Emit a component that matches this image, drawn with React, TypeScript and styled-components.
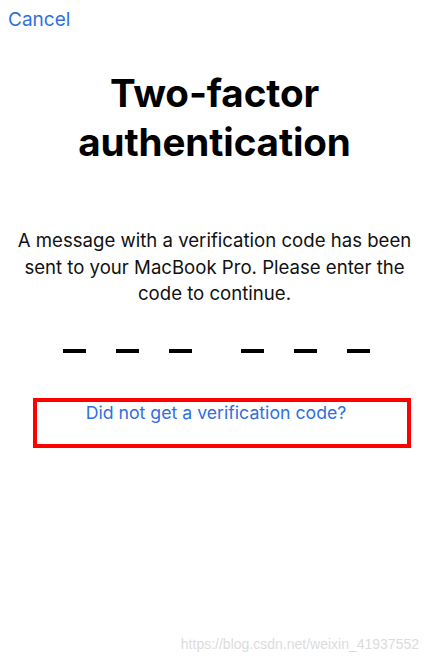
import styled, { createGlobalStyle } from 'styled-components';

const GlobalStyle = createGlobalStyle`
  html, body {
    margin: 0;
    padding: 0;
    background: #fff;
  }
  body {
    font-family: Inter, "Noto Sans", "Liberation Sans", sans-serif;
    -webkit-font-smoothing: antialiased;
  }
`;

const Screen = styled.div`
  position: relative;
  width: 429px;
  height: 661px;
  overflow: hidden;
  background: #fff;
  display: flex;
  flex-direction: column;
`;

const TopBar = styled.div`
  display: flex;
  align-items: center;
  height: 38px;
  padding: 0 8px;
`;

const TextButton = styled.button`
  border: none;
  background: none;
  padding: 0;
  font-family: inherit;
  font-size: 19px;
  color: #2f6fe0;
  cursor: pointer;
`;

const Title = styled.h1`
  margin: 31px 0 0;
  font-size: 38.6px;
  font-weight: 700;
  line-height: 49px;
  letter-spacing: -0.1px;
  text-align: center;
  color: #000;
`;

const Message = styled.p`
  margin: 60px 8px 0;
  font-size: 18.6px;
  line-height: 26.5px;
  text-align: center;
  color: #111;
`;

const CodeRow = styled.div`
  display: flex;
  justify-content: center;
  align-items: center;
  gap: 49px;
  margin-top: 28px;
  padding-left: 4px;
  height: 32px;
`;

const Group = styled.div`
  display: flex;
  gap: 30px;
`;

const Slot = styled.span`
  display: block;
  width: 23px;
  height: 4px;
  background: #000;
`;

const Highlight = styled.div`
  align-self: flex-start;
  margin: 31px 0 0 33px;
  width: 378px;
  height: 50px;
  box-sizing: border-box;
  border: 4px solid #ff0000;
  display: flex;
  justify-content: center;
`;

const LinkText = styled.a`
  font-size: 17.7px;
  line-height: 22px;
  color: #2f6fe0;
  text-decoration: none;
  margin-right: 12px;
`;

const Watermark = styled.div`
  position: absolute;
  right: 10px;
  bottom: 9px;
  font-family: "Liberation Sans", Arial, sans-serif;
  font-size: 14px;
  color: #dcdcdc;
`;

export default function App() {
  return (
    <>
      <GlobalStyle />
      <Screen>
        <TopBar>
          <TextButton>Cancel</TextButton>
        </TopBar>
        <Title>
          Two-factor
          <br />
          authentication
        </Title>
        <Message>
          A message with a verification code has been sent to your MacBook Pro. Please enter the code to continue.
        </Message>
        <CodeRow>
          <Group>
            <Slot />
            <Slot />
            <Slot />
          </Group>
          <Group>
            <Slot />
            <Slot />
            <Slot />
          </Group>
        </CodeRow>
        <Highlight>
          <LinkText href="#">Did not get a verification code?</LinkText>
        </Highlight>
        <Watermark>https://blog.csdn.net/weixin_41937552</Watermark>
      </Screen>
    </>
  );
}
